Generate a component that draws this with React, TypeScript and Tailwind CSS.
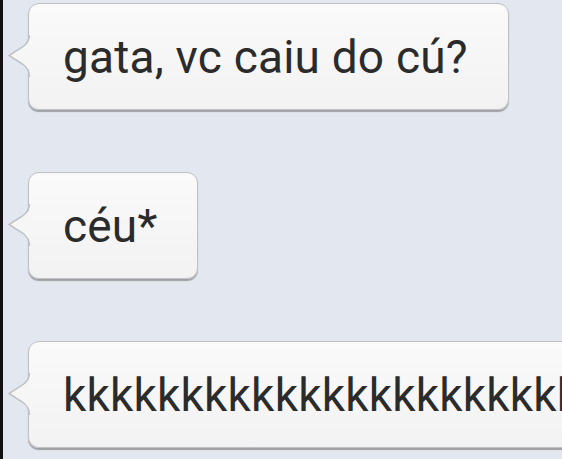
import React from "react";

const messages = [
  { id: 1, text: "gata, vc caiu do cú?" },
  { id: 2, text: "céu*" },
  { id: 3, text: "kkkkkkkkkkkkkkkkkkkkkkkkk" },
];

// Little pointer on the left side of each incoming bubble
function Tail() {
  return (
    <svg
      className="absolute left-[-21px] top-[31px]"
      width="23"
      height="42"
      viewBox="0 0 23 42"
    >
      <path
        d="M22 0 C22 6 19 9 15 12 L1 20.5 L15 29 C19 32 22 35 22 42 Z"
        fill="#f6f6f6"
      />
      <path
        d="M21.5 0 C21.5 6 18.5 9 14.5 12 L1 20.5 L14.5 29 C18.5 32 21.5 35 21.5 42"
        fill="none"
        stroke="#bfc1c5"
        strokeWidth="1.5"
      />
    </svg>
  );
}

function Bubble({ text }: { text: string }) {
  return (
    <div className="relative flex h-[107px] shrink-0 items-center whitespace-nowrap rounded-[11px] border-[1.5px] border-[#bfc1c5] bg-gradient-to-b from-[#fafafa] to-[#f2f2f2] pl-[34px] pr-[40px] shadow-[0_2px_1px_#9ea0a4]">
      <Tail />
      <span className="text-[46px] leading-none tracking-[0.2px] text-[#2b2b2b]">
        {text}
      </span>
    </div>
  );
}

export default function App() {
  return (
    <div
      className="flex h-[459px] w-[562px] overflow-hidden bg-[#e3e7ef]"
      style={{ fontFamily: "Roboto, 'Noto Sans', sans-serif" }}
    >
      <div className="w-[3px] shrink-0 bg-[#111]" />
      <div className="flex flex-col items-start gap-[62px] pt-[3px] pl-[25px]">
        {messages.map((m) => (
          <Bubble key={m.id} text={m.text} />
        ))}
      </div>
    </div>
  );
}
